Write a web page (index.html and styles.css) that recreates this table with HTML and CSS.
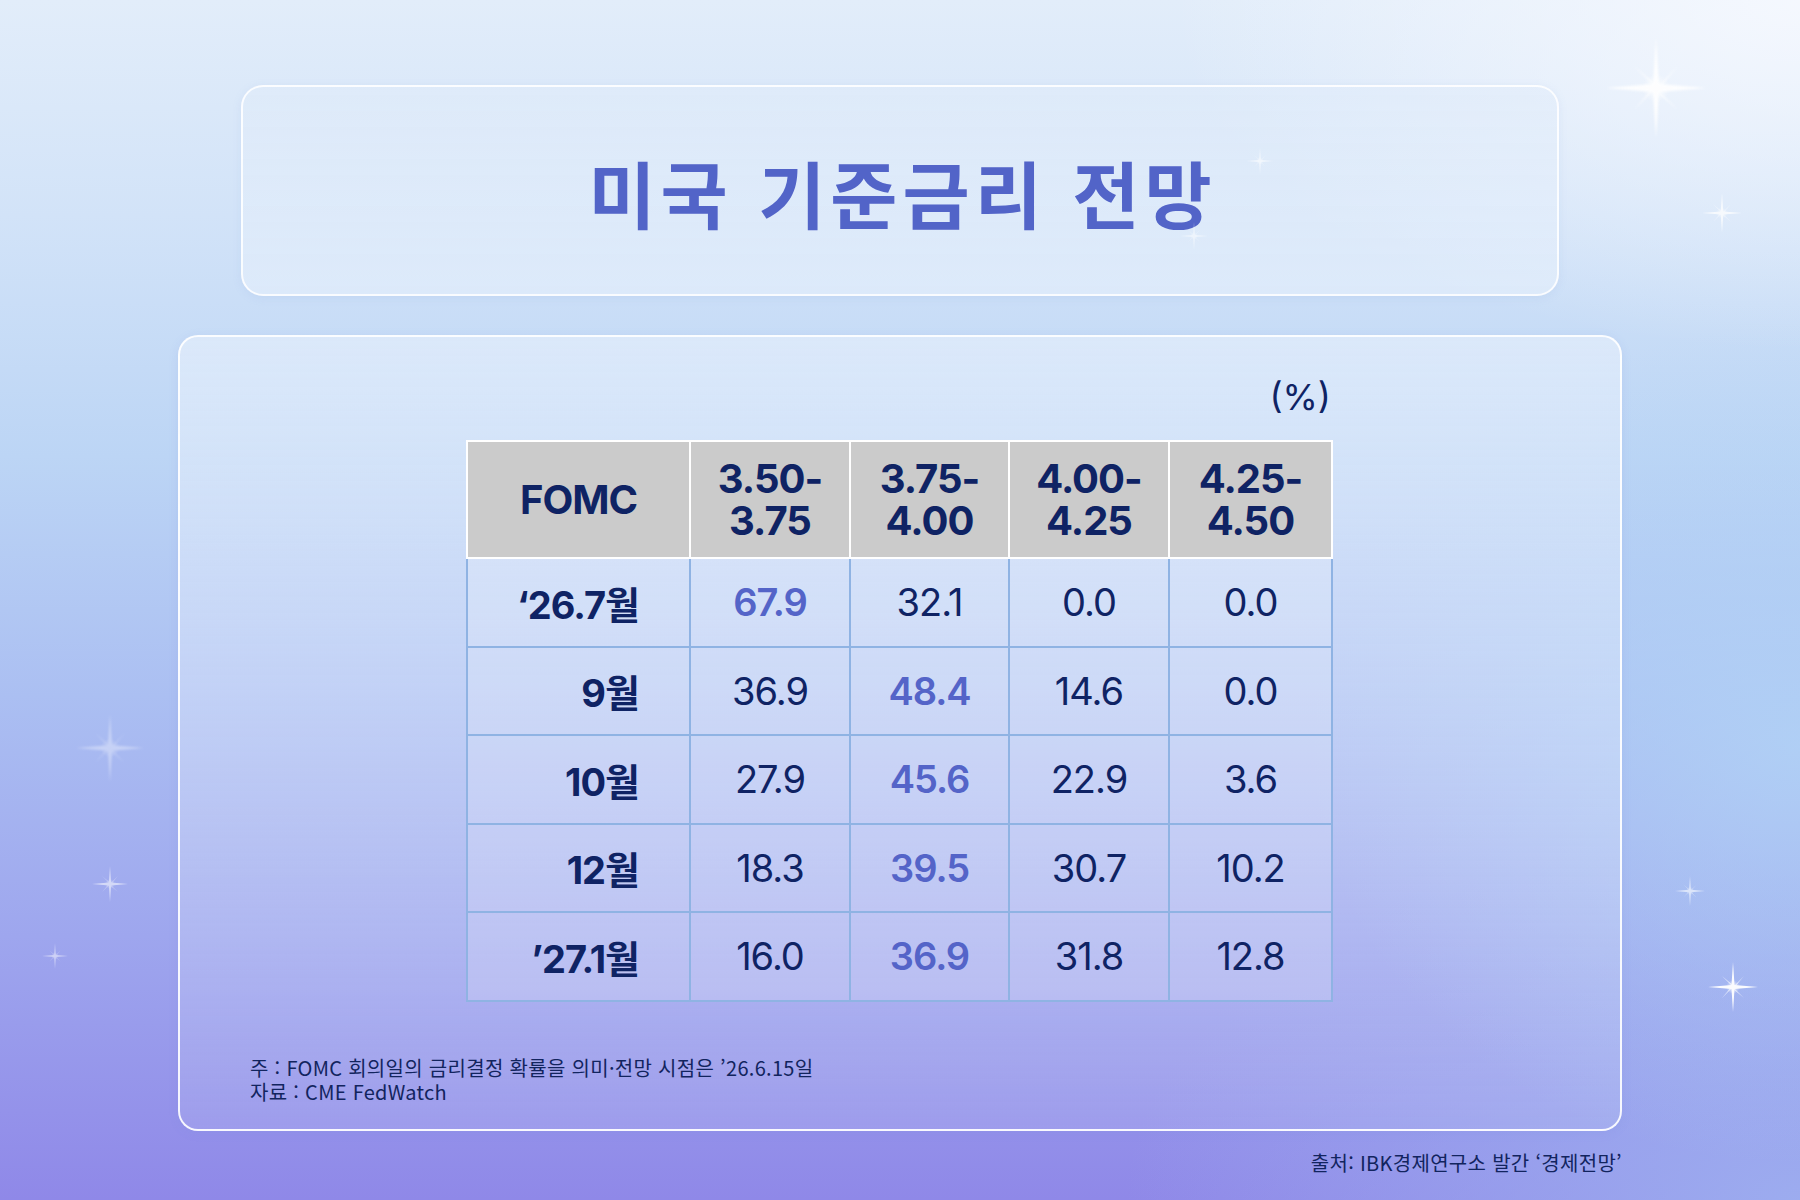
FILE: index.html
```html
<!DOCTYPE html>
<html lang="ko">
<head>
<meta charset="utf-8">
<title>미국 기준금리 전망</title>
<link rel="stylesheet" href="styles.css">
</head>
<body>
<svg class="defs" width="0" height="0" aria-hidden="true">
  <defs>
    <filter id="soft" x="-20%" y="-20%" width="140%" height="140%">
      <feGaussianBlur stdDeviation="1.2"/>
    </filter>
    <radialGradient id="glow">
      <stop offset="0" stop-color="#fff" stop-opacity="0.9"/>
      <stop offset="1" stop-color="#fff" stop-opacity="0"/>
    </radialGradient>
    <g id="spark">
      <circle cx="50" cy="50" r="14" fill="url(#glow)"/>
      <path d="M50 0 L53 46 L100 50 L53 54 L50 100 L47 54 L0 50 L47 46 Z" fill="#fff" filter="url(#soft)"/>
      <path d="M50 50 m-22 -22 L52 48 L72 28 L52 52 L72 72 L48 52 L28 72 L48 48 Z" fill="#fff" opacity="0.7" filter="url(#soft)"/>
    </g>
  </defs>
</svg>

<div class="page">
  <svg class="star st1" viewBox="0 0 100 100"><use href="#spark"/></svg>
  <svg class="star st2" viewBox="0 0 100 100"><use href="#spark"/></svg>
  <svg class="star st3" viewBox="0 0 100 100"><use href="#spark"/></svg>
  <svg class="star st4" viewBox="0 0 100 100"><use href="#spark"/></svg>
  <svg class="star st5" viewBox="0 0 100 100"><use href="#spark"/></svg>
  <svg class="star st6" viewBox="0 0 100 100"><use href="#spark"/></svg>
  <svg class="star st7" viewBox="0 0 100 100"><use href="#spark"/></svg>
  <svg class="star st8" viewBox="0 0 100 100"><use href="#spark"/></svg>
  <svg class="star st9" viewBox="0 0 100 100"><use href="#spark"/></svg>

  <header class="title-box">
    <h1 class="title">미국 기준금리 전망</h1>
  </header>

  <section class="card">
    <div class="table-wrap">
      <div class="unit">(%)</div>
      <table class="rates">
        <colgroup>
          <col class="c-label">
          <col class="c-a">
          <col class="c-b">
          <col class="c-c">
          <col class="c-d">
        </colgroup>
        <thead>
          <tr>
            <th>FOMC</th>
            <th>3.50-<br>3.75</th>
            <th>3.75-<br>4.00</th>
            <th>4.00-<br>4.25</th>
            <th>4.25-<br>4.50</th>
          </tr>
        </thead>
        <tbody>
          <tr>
            <td class="label">‘26.7월</td>
            <td class="hl">67.9</td>
            <td>32.1</td>
            <td>0.0</td>
            <td>0.0</td>
          </tr>
          <tr>
            <td class="label">9월</td>
            <td>36.9</td>
            <td class="hl">48.4</td>
            <td>14.6</td>
            <td>0.0</td>
          </tr>
          <tr>
            <td class="label">10월</td>
            <td>27.9</td>
            <td class="hl">45.6</td>
            <td>22.9</td>
            <td>3.6</td>
          </tr>
          <tr>
            <td class="label">12월</td>
            <td>18.3</td>
            <td class="hl">39.5</td>
            <td>30.7</td>
            <td>10.2</td>
          </tr>
          <tr>
            <td class="label">’27.1월</td>
            <td>16.0</td>
            <td class="hl">36.9</td>
            <td>31.8</td>
            <td>12.8</td>
          </tr>
        </tbody>
      </table>
    </div>
    <div class="notes">
      <p>주 : FOMC 회의일의 금리결정 확률을 의미·전망 시점은 ’26.6.15일</p>
      <p>자료 : CME FedWatch</p>
    </div>
  </section>

  <footer class="source">출처: IBK경제연구소 발간 ‘경제전망’</footer>
</div>
</body>
</html>
```

FILE: styles.css
```css
html, body {
  margin: 0;
  padding: 0;
}

body {
  width: 1800px;
  height: 1200px;
  overflow: hidden;
  font-family: Inter, "Noto Sans CJK KR", sans-serif;
  color: #0f2364;
}

.defs {
  position: absolute;
  width: 0;
  height: 0;
}

.page {
  position: relative;
  width: 1800px;
  height: 1200px;
  box-sizing: border-box;
  padding-top: 85px;
  display: flex;
  flex-direction: column;
  align-items: center;
  background:
    radial-gradient(ellipse 900px 500px at 100% 0%, rgba(248, 250, 255, 0.85), rgba(248, 250, 255, 0) 70%),
    radial-gradient(ellipse 700px 600px at 100% 62%, rgba(178, 212, 246, 0.8), rgba(178, 212, 246, 0) 70%),
    radial-gradient(ellipse 900px 500px at 100% 100%, rgba(158, 176, 240, 0.9), rgba(158, 176, 240, 0) 75%),
    linear-gradient(to bottom, #e2edfa 0%, #d2e3f8 18%, #bcd5f5 38%, #abbff2 58%, #9ea6ee 78%, #8f88e8 100%);
}

.star {
  position: absolute;
  display: block;
}
.st1 { left: 1606px; top: 38px; width: 100px; height: 100px; opacity: 0.9; }
.st2 { left: 1702px; top: 193px; width: 40px; height: 40px; opacity: 0.75; }
.st3 { left: 1247px; top: 148px; width: 26px; height: 26px; opacity: 0.6; }
.st4 { left: 1180px; top: 222px; width: 28px; height: 28px; opacity: 0.5; }
.st5 { left: 76px;  top: 714px; width: 68px; height: 68px; opacity: 0.35; }
.st6 { left: 92px;  top: 866px; width: 36px; height: 36px; opacity: 0.55; }
.st7 { left: 42px;  top: 943px; width: 26px; height: 26px; opacity: 0.5; }
.st8 { left: 1675px; top: 876px; width: 30px; height: 30px; opacity: 0.6; }
.st9 { left: 1708px; top: 962px; width: 50px; height: 50px; opacity: 0.95; }

.title-box {
  width: 1318px;
  height: 211px;
  box-sizing: border-box;
  border: 2px solid rgba(255, 255, 255, 0.85);
  border-radius: 22px;
  background: linear-gradient(to bottom, rgba(225, 236, 250, 0.55), rgba(232, 241, 252, 0.6));
  box-shadow: 0 2px 8px rgba(140, 170, 220, 0.15);
  display: flex;
  align-items: center;
  justify-content: center;
}

.title {
  margin: 0;
  font-family: "Noto Sans CJK KR", sans-serif;
  font-weight: 700;
  font-size: 73px;
  line-height: 1;
  letter-spacing: 5px;
  color: #5264c8;
  padding-left: 5px;
  padding-top: 2px;
}

.card {
  margin-top: 39px;
  width: 1444px;
  height: 796px;
  box-sizing: border-box;
  border: 2px solid rgba(255, 255, 255, 0.9);
  border-radius: 20px;
  background: linear-gradient(to bottom, rgba(236, 243, 253, 0.55), rgba(220, 226, 250, 0.15));
  box-shadow: 0 2px 10px rgba(120, 140, 220, 0.15);
  padding: 38px 70px 0 70px;
  display: flex;
  flex-direction: column;
}

.table-wrap {
  width: 865px;
  align-self: center;
  margin-left: -3px;
  display: flex;
  flex-direction: column;
}

.unit {
  align-self: flex-end;
  font-size: 36px;
  line-height: 44px;
  font-weight: 400;
  color: #0f2364;
  margin-bottom: 21px;
}

.rates {
  border-collapse: collapse;
  width: 865px;
  table-layout: fixed;
}

.c-label { width: 223px; }
.c-a { width: 160px; }
.c-b { width: 159px; }
.c-c { width: 160px; }
.c-d { width: 163px; }

.rates th {
  height: 117px;
  box-sizing: border-box;
  background: #cbcbcb;
  border: 2px solid #ffffff;
  font-size: 40px;
  line-height: 42px;
  font-weight: 700;
  letter-spacing: -1px;
  color: #0f2364;
  text-align: center;
  vertical-align: middle;
  padding: 0;
}

.rates td {
  height: 88.5px;
  box-sizing: border-box;
  border: 2px solid #8fb3e3;
  background: rgba(255, 255, 255, 0.18);
  font-size: 38px;
  font-weight: 400;
  letter-spacing: -1px;
  text-align: center;
  vertical-align: middle;
  padding: 0;
  color: #0f2364;
}

.rates tbody tr:first-child td {
  border-top-color: #c4daf2;
}

.rates td.label {
  text-align: right;
  padding-right: 50px;
  font-weight: 700;
}

.rates td.hl {
  color: #5464c8;
  font-weight: 600;
}

.notes {
  margin-top: 54px;
  font-family: "Noto Sans CJK KR", sans-serif;
  font-size: 20px;
  line-height: 24px;
  letter-spacing: 0.3px;
  color: #12245e;
}

.notes p {
  margin: 0;
}

.source {
  width: 1444px;
  margin-top: 20px;
  text-align: right;
  font-family: "Noto Sans CJK KR", sans-serif;
  font-size: 20px;
  line-height: 24px;
  letter-spacing: 0.3px;
  color: #12245e;
}
```
